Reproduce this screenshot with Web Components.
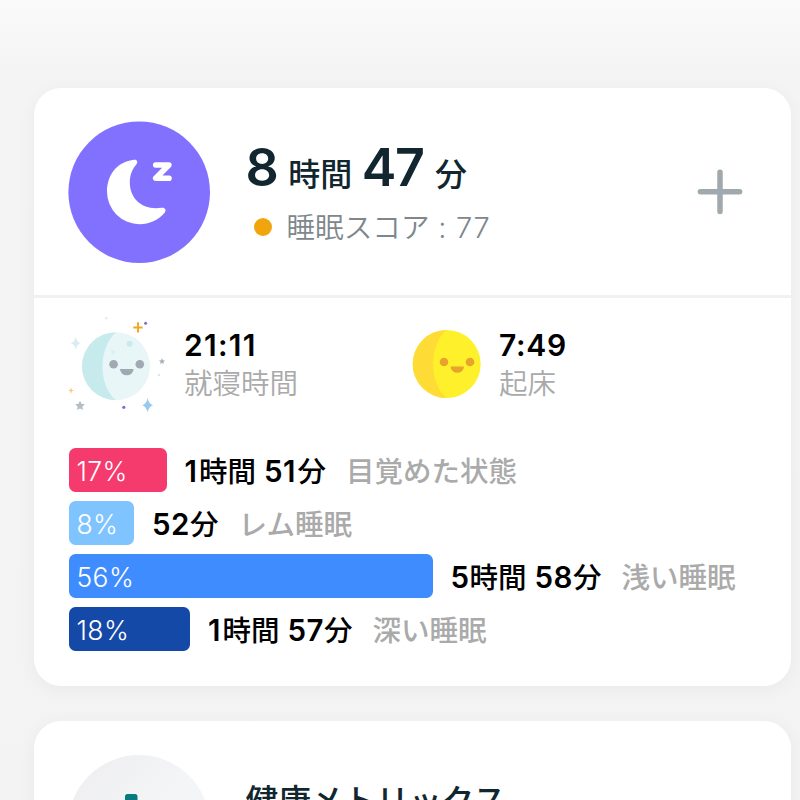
<!DOCTYPE html>
<html lang="ja">
<head>
<meta charset="utf-8">
<title>睡眠</title>
<style>
html,body{margin:0;height:100%;overflow:hidden}
body{background:linear-gradient(#fafafa 0,#f4f4f4 75px,#f3f3f3 100%);font-family:"Noto Sans","Noto Sans CJK JP",sans-serif;color:#12262f}
</style>
</head>
<body>
<sleep-page></sleep-page>
<script>
const define=(name,html,setup)=>{
  const t=document.createElement('template');
  t.innerHTML=html;
  customElements.define(name,class extends HTMLElement{
    connectedCallback(){
      if(this.shadowRoot)return;
      this.attachShadow({mode:'open'}).append(t.content.cloneNode(true));
      if(setup)setup(this,this.shadowRoot);
    }
  });
};

define('info-card',`<style>
:host{display:block;box-sizing:border-box;width:757.500px;background:#fff;border-radius:27px;box-shadow:0 3px 18px rgba(20,30,40,.045)}
</style><slot></slot>`);

define('sleep-icon',`<style>:host{display:block;width:142px;height:142px;flex:none}svg{display:block}</style>
<svg width="142" height="142" viewBox="68 121 142 142"><circle cx="139.2" cy="192.2" r="70.8" fill="#8271ff"/>
<path d="M133 160C117 162 107 175 107 191.500A32.700 32.700 0 0 0 139.800 224.300C149 224.300 158.500 220 164.400 213C167 210 164.800 207.200 161.500 207.800C142 210.500 129.800 198.500 129.800 182.500C129.800 175 132.500 169 136.300 164.600C138.500 161.500 136.500 159.200 133 160Z" fill="#fff"/>
<path d="M155.700 165H168.900L155.700 178.200H169" fill="none" stroke="#fff" stroke-width="5.600" stroke-linecap="round" stroke-linejoin="round"/></svg>`);

define('plus-icon',`<style>:host{display:block;width:46px;height:46px}svg{display:block}</style>
<svg width="46" height="46" viewBox="0 0 46 46"><path d="M23 3.200V42.400M3.400 22.800H42.600" stroke="#a0a9ad" stroke-width="5.500" stroke-linecap="round"/></svg>`);

define('sleep-header',`<style>
:host{display:flex;box-sizing:border-box;height:207px;padding:33px 48px 0 34.500px}
.copy{flex:1;margin-left:36px}
.total{display:flex;align-items:baseline;height:60px;margin-top:17px;line-height:60px;font-weight:600;white-space:pre}
.n{font-family:Inter,sans-serif;font-size:52px;letter-spacing:-1.500px}.u{font-size:32px;font-weight:500}
.score{display:flex;align-items:center;height:36px;margin-top:11px;line-height:36px;font-size:28.6px;color:#7d878d;font-weight:350;white-space:pre}
.s{font-family:Inter,sans-serif;font-size:29px;letter-spacing:.7px}
i{width:18px;height:18px;border-radius:50%;background:#f1a50d;margin:0 14.500px 0 8px}
plus-icon{margin-top:48px}
</style><sleep-icon></sleep-icon><div class="copy">
<div class="total"><span class="n" style="margin-left:-.5px">8</span><span class="u" style="margin-left:11px">時間</span><span class="n" style="margin-left:9.500px">47</span><span class="u" style="margin-left:11.500px">分</span></div>
<div class="score"><i></i><span>睡眠スコア<span class="s"> : 77</span></span></div></div><plus-icon></plus-icon>`);

define('moon-face',`<style>:host{display:block;width:98px;height:98px;flex:none}svg{display:block}</style>
<svg width="98" height="98" viewBox="68 317 98 98">
<circle cx="116" cy="366.200" r="34" fill="#e8f6f8"/><path d="M116 332.200A34 34 0 0 0 116 400.200C98 385 98 348 116 332.200Z" fill="#c7eaed"/>
<circle cx="129.600" cy="343.700" r="3" fill="#c9ebee"/><path d="M111 349l5 3-4 3z" fill="#dceff2"/>
<circle cx="113.600" cy="364.300" r="4.300" fill="#a0a8b1"/><circle cx="139.800" cy="364.300" r="4.300" fill="#a0a8b1"/><path d="M120 369H133.600A6.800 6.300 0 0 1 120 369Z" fill="#a0a8b1"/>
<path d="M138 322.300V332.600M133.300 327.500H142.600" stroke="#f2a51f" stroke-width="1.900"/>
<circle cx="145.600" cy="323.300" r="1.500" fill="#7773cc"/><circle cx="123.800" cy="407.300" r="1.600" fill="#7773cc"/>
<path d="M75.700 336.500Q76.500 342.300 81 343.200Q76.500 344 75.700 350Q74.900 344 70.500 343.200Q74.900 342.300 75.700 336.500Z" fill="#d9edf5"/>
<path d="M147.600 398Q148.800 404 153 405.200Q148.800 406.400 147.600 412.600Q146.400 406.400 142.300 405.200Q146.400 404 147.600 398Z" fill="#9ac9ee"/>
<path d="M80 400.800l1.500 3 3.400.5-2.500 2.400.6 3.400-3-1.600-3 1.600.6-3.400-2.500-2.400 3.400-.5z" fill="#b5bec7"/>
<path d="M162 358.300l1 1.900 2 .3-1.500 1.500.3 2.100-1.800-1-1.800 1 .3-2.100-1.500-1.500 2-.3z" fill="#aab3bd"/>
<path d="M71 387.500l.9 2.200 2.200.8-2.200.8-.9 2.400-.9-2.400-2.200-.8 2.200-.8z" fill="#f8cc83"/><circle cx="106.300" cy="318.300" r="1.300" fill="#d9edf1"/><circle cx="159" cy="375" r="1.300" fill="#d3ebf4"/>
</svg>`);

define('sun-face',`<style>:host{display:block;width:70px;height:98px;flex:none}svg{display:block}</style>
<svg width="70" height="98" viewBox="412 317 70 98"><circle cx="446.700" cy="364" r="34" fill="#fff02c"/><path d="M446.700 330A34 34 0 0 0 446.700 398C428.700 383 428.700 345 446.700 330Z" fill="#ffdb35"/>
<circle cx="444" cy="362" r="4.300" fill="#e7a42c"/><circle cx="470" cy="362" r="4.300" fill="#e7a42c"/><path d="M450.600 366.500H464A6.700 6.300 0 0 1 450.600 366.500Z" fill="#e7a42c"/></svg>`);

define('clock-entry',`<style>
:host{display:flex}
.t{margin-left:var(--gap,18px);margin-top:9px}
.v{height:38px;font:600 30px/38px Inter,"Noto Sans CJK JP",sans-serif;letter-spacing:var(--track,1.300px);color:#000}
.l{height:36px;line-height:36px;font-size:28.5px;font-weight:350;color:#aaa;font-family:"Noto Sans CJK JP",sans-serif}
</style><slot name="icon"></slot><div class="t"><div class="v"><slot name="time"></slot></div><div class="l"><slot></slot></div></div>`);

define('stage-row',`<style>
:host{display:flex;height:44px;line-height:44px;align-items:center;font-family:Inter,"Noto Sans CJK JP",sans-serif;white-space:pre}
.bar{box-sizing:border-box;height:44px;padding-left:8px;border-radius:6.500px;color:#fff;font-size:26.500px;line-height:46px;letter-spacing:.4px;font-weight:350;flex:none}
.d{margin-left:18px;font-size:29.500px;font-weight:600;color:#000}
.k{margin-left:20px;font-size:28.500px;font-weight:500;color:#aaa;font-family:"Noto Sans CJK JP",sans-serif}
.n{letter-spacing:.500px}
.one{letter-spacing:2px}
.c{font-family:"Noto Sans CJK JP",sans-serif;font-size:28.500px;font-weight:500}
</style><div class="bar"></div><div class="d"></div><div class="k"><slot></slot></div>`,(el,r)=>{
  const b=r.querySelector('.bar');
  b.textContent=el.getAttribute('percent')+'%';
  b.style.width=el.getAttribute('width')+'px';
  b.style.background=el.getAttribute('color');
  for(const part of el.getAttribute('duration').split(/([時間分]+|1)/)){
    if(!part)continue;
    const s=document.createElement('span');
    s.textContent=part;
    s.className=part==='1'?'one':/[時間分]/.test(part)?'c':'n';
    r.querySelector('.d').append(s);
  }
});

define('metric-header',`<style>
:host{display:flex;padding:34px 0 0 34.500px}
svg{display:block;flex:none}
h2{margin:20px 0 0 35.500px;font:500 32.700px/48px "Noto Sans CJK JP",sans-serif}
</style><svg width="142" height="142" viewBox="0 0 142 142"><defs><linearGradient id="g" x2="1" y2="1"><stop stop-color="#ededee"/><stop offset=".5" stop-color="#f4f5f7"/></linearGradient></defs><circle cx="71" cy="71" r="71" fill="url(#g)"/><path d="M57 55V41.500q0-2.500 2.500-2.500h7.500q2.500 0 2.500 2.500v13.500z" fill="#08797f"/></svg><h2><slot></slot></h2>`);

define('sleep-page',`<style>
:host{display:flex;flex-direction:column;gap:35px;box-sizing:border-box;height:100vh;overflow:hidden;padding:88px 0 0 33.500px}
.main{height:598px;flex:none}.next{height:250px;flex:none}
hr{border:0;margin:0;height:3px;background:#f1f1f2}
.times{display:flex;margin-top:19px;padding-left:34.500px;height:131px}
.times clock-entry:first-child{width:344px}
.stages{display:grid;gap:9px;padding-left:35px}
</style>
<info-card class="main"><sleep-header></sleep-header><hr>
<div class="times"><clock-entry><moon-face slot="icon"></moon-face><span slot="time">21:11</span>就寝時間</clock-entry><clock-entry style="--gap:17px;--track:.7px"><sun-face slot="icon"></sun-face><span slot="time">7:49</span>起床</clock-entry></div>
<div class="stages">
<stage-row percent="17" width="98" color="#f53b6d" duration="1時間 51分">目覚めた状態</stage-row>
<stage-row percent="8" width="65.500" color="#80c4ff" duration="52分">レム睡眠</stage-row>
<stage-row percent="56" width="364" color="#3f8cff" duration="5時間 58分">浅い睡眠</stage-row>
<stage-row percent="18" width="121.500" color="#1549a7" duration="1時間 57分">深い睡眠</stage-row>
</div></info-card>
<info-card class="next"><metric-header>健康メトリックス</metric-header></info-card>`);
</script>
</body>
</html>
